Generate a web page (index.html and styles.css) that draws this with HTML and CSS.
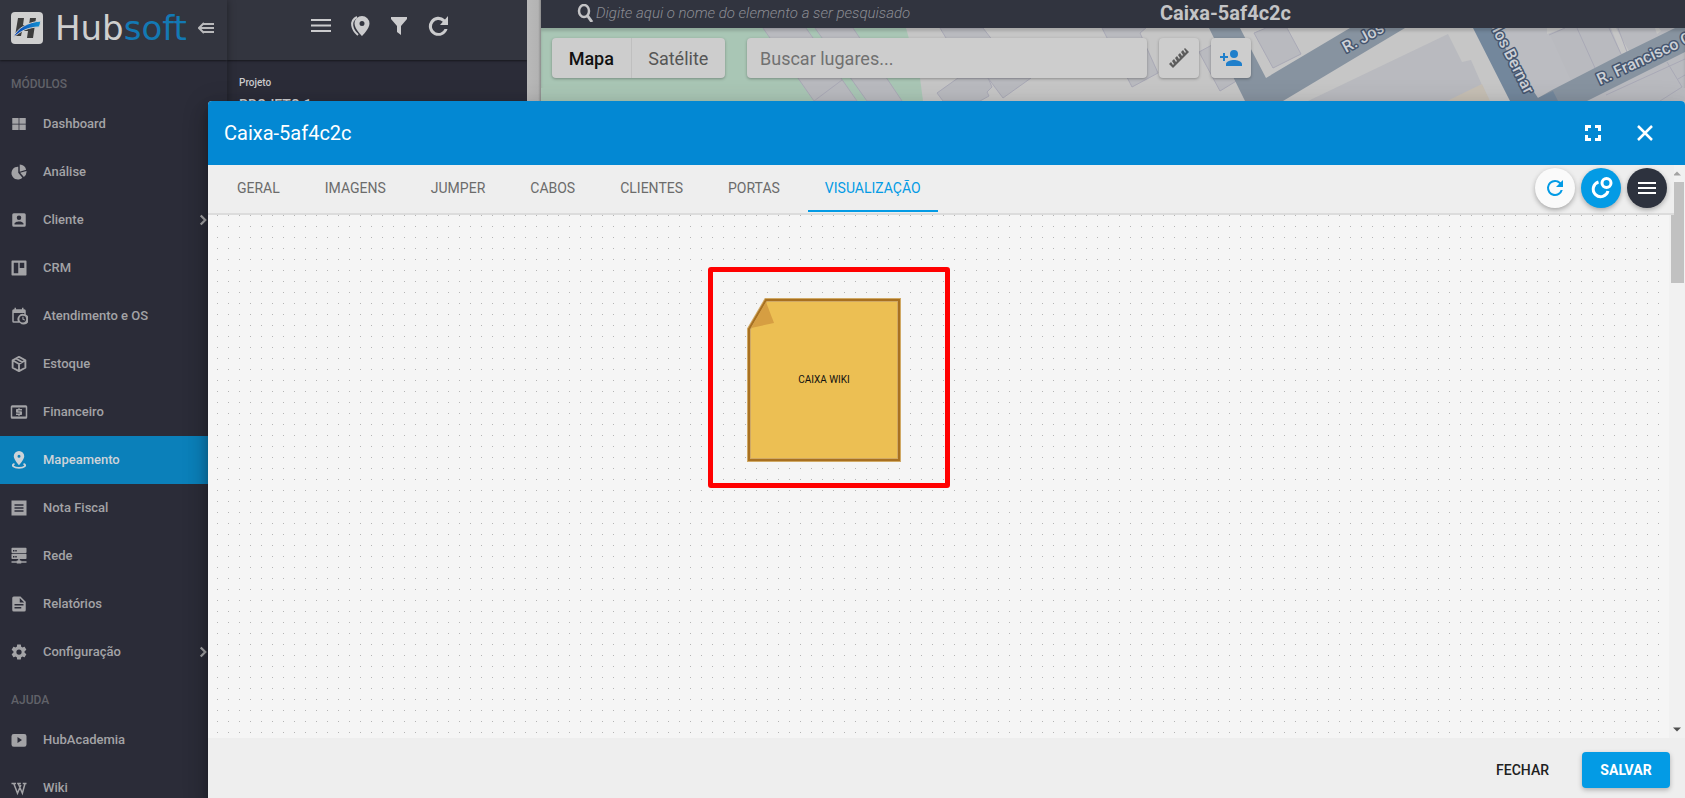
FILE: index.html
```html
<!DOCTYPE html>
<html lang="pt-BR">
<head>
<meta charset="utf-8">
<title>Hubsoft - Mapeamento</title>
<link rel="stylesheet" href="styles.css">
</head>
<body>
<div class="app">
  <aside class="sidebar">
    <header class="brand">
      <svg class="brand-mark" viewBox="0 0 32 32" aria-hidden="true">
        <defs><linearGradient id="swoosh"><stop offset="0" stop-color="#0a3fb5"/><stop offset="1" stop-color="#1292d0"/></linearGradient></defs>
        <rect width="32" height="32" rx="4" fill="#cfcfcf"/>
        <path d="M7 6h6l-1 7h6l1-7h6l-3 20h-6l1-7H11l-1 5H4z" fill="#3c3c3c"/>
        <path d="M2 26C6 16 17 10 30 9c-1 3-1 5-2 6C18 15 9 19 2 26z" fill="url(#swoosh)" stroke="#cfcfcf"/>
      </svg>
      <span class="brand-name">Hub<span class="brand-accent">soft</span></span>
      <button class="plain brand-toggle" aria-label="Recolher menu"><svg viewBox="0 0 16 12"><path d="M5 2h11M1 6h15M5 10h11M6 1L1 6l5 5" fill="none" stroke="currentColor" stroke-width="2"/></svg></button>
    </header>
    <nav class="menu">
      <h2 class="menu-title">MÓDULOS</h2>
      <a class="menu-item" href="#"><svg class="ico" viewBox="0 0 24 24"><path d="M3 4h8.500v7.500H3zM12.500 4H21v7.500h-8.500zM3 12.500h8.500V20H3zM12.500 12.500H21V20h-8.500z"/></svg>Dashboard</a>
      <a class="menu-item" href="#"><svg class="ico" viewBox="0 0 24 24"><path d="M11 5v8l5.500 6.500A8.500 8.500 0 1 1 11 5zM13 2a9 9 0 0 1 8.500 7L13 11.500zM13.500 13l8.500-2.500a9 9 0 0 1-3.500 8z"/></svg>Análise</a>
      <a class="menu-item" href="#"><svg class="ico" viewBox="0 0 24 24"><path d="M3 5v14a2 2 0 0 0 2 2h14a2 2 0 0 0 2-2V5a2 2 0 0 0-2-2H5a2 2 0 0 0-2 2zm12 4a3 3 0 1 1-6 0 3 3 0 0 1 6 0zm-9 8c0-2 4-3.100 6-3.100s6 1.100 6 3.100v1H6z"/></svg>Cliente<svg class="ico chevron" viewBox="0 0 24 24"><path d="M9 6l6 6-6 6" fill="none" stroke="currentColor" stroke-width="3"/></svg></a>
      <a class="menu-item" href="#"><svg class="ico" viewBox="0 0 24 24"><path fill-rule="evenodd" d="M3 2h18a1 1 0 0 1 1 1v18a1 1 0 0 1-1 1H3a1 1 0 0 1-1-1V3a1 1 0 0 1 1-1zm2 3v14h6V5zm8 0v7h6V5z"/></svg>CRM</a>
      <a class="menu-item" href="#"><svg class="ico" viewBox="0 0 24 24"><path fill-rule="evenodd" d="M6 1h2v2h8V1h2v2h1a2 2 0 0 1 2 2v5a7 7 0 1 1-8 11H5a2 2 0 0 1-2-2V5a2 2 0 0 1 2-2h1zM5 8v11h5.500A7 7 0 0 1 19 9.500V8zm12 3.500a4.500 4.500 0 1 0 0 9 4.500 4.500 0 0 0 0-9zM16.500 13v3.500l3 1.500.6-1-2.100-1.200V13z"/></svg>Atendimento e OS</a>
      <a class="menu-item" href="#"><svg class="ico" viewBox="0 0 24 24"><path d="M12 2.500l8.500 4.500v10L12 21.500 3.500 17V7zM3.500 7l8.500 5 8.500-5M12 12v9.500M8 4.700l8.500 5" fill="none" stroke="currentColor" stroke-width="2.500" stroke-linejoin="round"/></svg>Estoque</a>
      <a class="menu-item" href="#"><svg class="ico" viewBox="0 0 24 24"><path fill-rule="evenodd" d="M3 3h18a2 2 0 0 1 2 2v14a2 2 0 0 1-2 2H3a2 2 0 0 1-2-2V5a2 2 0 0 1 2-2zm0 3v12h18V6z"/><path d="M11 7h2v1h3v2h-5v1h4a1 1 0 0 1 1 1v3a1 1 0 0 1-1 1h-2v1h-2v-1H8v-2h5v-1H9a1 1 0 0 1-1-1V9a1 1 0 0 1 1-1h2z"/></svg>Financeiro</a>
      <a class="menu-item active" href="#" aria-current="page"><svg class="ico" viewBox="0 0 24 24"><path fill-rule="evenodd" d="M12 0a7 7 0 0 1 7 7c0 4.500-7 12-7 12S5 11.500 5 7a7 7 0 0 1 7-7zm0 5a2 2 0 1 0 0 4 2 2 0 0 0 0-4z"/><path d="M6 17c-5 2-1 5.500 6 5.500s11-3.500 6-5.500" fill="none" stroke="currentColor" stroke-width="2.500"/></svg>Mapeamento</a>
      <a class="menu-item" href="#"><svg class="ico" viewBox="0 0 24 24"><path fill-rule="evenodd" d="M2 2h20v20H2zm4 5v2h12V7zm0 4v2h12v-2zm0 4v2h12v-2z"/></svg>Nota Fiscal</a>
      <a class="menu-item" href="#"><svg class="ico" viewBox="0 0 24 24"><path fill-rule="evenodd" d="M3 1h18a1 1 0 0 1 1 1v5a1 1 0 0 1-1 1H3a1 1 0 0 1-1-1V2a1 1 0 0 1 1-1zm1 3v2h2V4zm3 0v2h2V4zM3 9h18a1 1 0 0 1 1 1v5a1 1 0 0 1-1 1h-8v2h2v1h7v2h-7v1H9v-1H2v-2h7v-1h2v-2H3a1 1 0 0 1-1-1v-5a1 1 0 0 1 1-1zm1 3v2h2v-2zm3 0v2h2v-2z"/></svg>Rede</a>
      <a class="menu-item" href="#"><svg class="ico" viewBox="0 0 24 24"><path fill-rule="evenodd" d="M5 2h9l7 7v11a2 2 0 0 1-2 2H5a2 2 0 0 1-2-2V4a2 2 0 0 1 2-2zm8 2v6h6zM6 12v2h12v-2zm0 4v2h9v-2z"/></svg>Relatórios</a>
      <a class="menu-item" href="#"><svg class="ico" viewBox="0 0 24 24"><path d="M12 15.500A3.500 3.500 0 1 1 12 8.500a3.500 3.500 0 0 1 0 7m7.430-2.530c.04-.32.070-.64.070-.97s-.03-.66-.07-1l2.110-1.630c.19-.15.240-.42.120-.64l-2-3.460c-.12-.22-.39-.31-.61-.22l-2.490 1c-.52-.39-1.060-.73-1.690-.98l-.37-2.650A.506.506 0 0 0 14 2h-4c-.25 0-.46.180-.5.420l-.37 2.650c-.63.250-1.170.590-1.690.98l-2.490-1c-.22-.09-.49 0-.61.220l-2 3.460c-.13.220-.07.490.12.640L4.570 11c-.04.340-.07.670-.07 1s.03.650.07.970l-2.110 1.660c-.19.150-.25.420-.12.640l2 3.460c.12.220.39.300.61.220l2.490-1.010c.52.400 1.060.74 1.690.99l.37 2.650c.04.240.25.420.5.420h4c.25 0 .46-.18.5-.42l.37-2.650c.63-.26 1.170-.59 1.690-.99l2.490 1.010c.22.080.49 0 .61-.22l2-3.460c.12-.22.070-.49-.12-.64z"/></svg>Configuração<svg class="ico chevron" viewBox="0 0 24 24"><path d="M9 6l6 6-6 6" fill="none" stroke="currentColor" stroke-width="3"/></svg></a>
      <h2 class="menu-title">AJUDA</h2>
      <a class="menu-item" href="#"><svg class="ico" viewBox="0 0 24 24"><path fill-rule="evenodd" d="M5 4h14a3 3 0 0 1 3 3v11a3 3 0 0 1-3 3H5a3 3 0 0 1-3-3V7a3 3 0 0 1 3-3zm5 4v8l6-4z"/></svg>HubAcademia</a>
      <a class="menu-item" href="#"><svg class="ico" viewBox="0 0 24 24"><path d="M2 6h6M9.500 6h5M17 6h5M5 6l5 13 4.500-11M11 6l5.500 13L20 6" fill="none" stroke="currentColor" stroke-width="2"/></svg>Wiki</a>
    </nav>
  </aside>

  <section class="project">
    <header class="project-bar">
      <button class="plain tool" aria-label="Menu"><svg viewBox="0 0 24 24"><path d="M2 5h20v2H2zm0 5.500h20v2H2zM2 16h20v2H2z"/></svg></button>
      <button class="plain tool" aria-label="Marcadores"><svg viewBox="0 0 24 24"><path fill-rule="evenodd" d="M14 2a7.500 7.500 0 0 1 7.500 7.500C21.500 15 14 22 14 22S6.500 15 6.500 9.500A7.500 7.500 0 0 1 14 2zm0 5a2.500 2.500 0 1 0 0 5 2.500 2.500 0 0 0 0-5z"/><path d="M9 3C1 7 4 16 10 21" fill="none" stroke="currentColor" stroke-width="2"/></svg></button>
      <button class="plain tool" aria-label="Filtro"><svg viewBox="0 0 24 24"><path d="M4 3h16v2l-6 7v9l-4-3v-6L4 5z"/></svg></button>
      <button class="plain tool" aria-label="Atualizar"><svg viewBox="0 0 24 24"><path d="M19 5.500a9.500 9.500 0 1 0 2.500 9.500h-3a6.500 6.500 0 1 1-1.700-7.300L14 11h8V2z"/></svg></button>
    </header>
    <div class="project-body">
      <div class="project-label">Projeto</div>
      <div class="project-name">PROJETO 1</div>
    </div>
  </section>

  <div class="gutter"></div>

  <main class="map-area">
    <header class="map-bar">
      <label class="element-search">
        <svg viewBox="0 0 18 18" aria-hidden="true"><ellipse cx="8" cy="7" rx="5" ry="6" fill="none" stroke="currentColor" stroke-width="2.500"/><path d="M11 11l5 7" stroke="currentColor" stroke-width="3"/></svg>
        <input type="text" aria-label="Pesquisar elemento" placeholder="Digite aqui o nome do elemento a ser pesquisado">
      </label>
      <h1 class="map-title">Caixa-5af4c2c</h1>
    </header>
    <div class="map">
      <svg class="map-drawing" viewBox="541 28 1144 770" preserveAspectRatio="xMinYMin slice" aria-hidden="true">
        <rect x="541" y="28" width="1144" height="770" fill="#c6c6c6"/>
        <path d="M541 28H906L920 78 923 101V798H541z" fill="#a9c6b5"/>
        <g fill="#b9babf" stroke="#a9a9b6">
          <path d="M763 28l51 73h43l-51-73zM815 28l52 73h35l-49-73zM814 101l28-21"/>
          <path d="M940 28l30 50 30-28-17-22zM937 93l21-15h30l4 9-5 5 2 4-9 5h-37zM988 78l15 20 28-20z"/>
          <path d="M1102 28l30 59 26-14-18-40 6-5zM1199 52l21 39 18-11-26-35zM1254 33l12-5h21l14 26-28 14z"/>
        </g>
        <path d="M1308 101l140-67 14 28 9-2 18 41z" fill="#b9babf"/>
        <path d="M1447 101l35-17 8 17z" fill="#c6bfb4"/>
        <path d="M1492 28h193v73H1558z" fill="#b9babf"/>
        <path d="M1492 28h55l25 55-36 17z" fill="#bbbcc1"/>
        <path d="M1547 34l18-6h-18zM1611 28l10 26 8-3-13-23zM1655 28l2 6 4-3-2-3z" fill="#c6c6c6"/>
        <path d="M1577 28l18 40M1609 28l12 26M1618 28l9 24M1549 35l16-7M1606 95l79-36M1667 62l15 25-22 14M1678 79l7-4" fill="none" stroke="#a9a9b6"/>
        <path d="M1209 28h31l26 50 84-50h55l-122 73h-38z" fill="#8793a0"/>
        <path d="M1538 98l14-8 70-36 53-26h10v24l-98 49h-47z" fill="#8793a0"/>
        <path d="M1473 28h19l46 70 15-7 5 10h-48z" fill="#73879c"/>
        <g class="street">
          <text transform="translate(1346 53) rotate(-29)">R. Jos</text>
          <text transform="translate(1600 85) rotate(-25)">R. Francisco G</text>
          <text transform="translate(1492 30) rotate(63)">los Bernar</text>
        </g>
      </svg>
      <div class="map-controls">
        <div class="map-type">
          <button class="map-type-on">Mapa</button><button>Satélite</button>
        </div>
        <input class="place-search" type="text" aria-label="Buscar lugares" placeholder="Buscar lugares...">
        <button class="map-button" aria-label="Régua"><svg viewBox="0 0 24 24"><path d="M2 18l2-2 2 3 1-1-2-3 2-2 2 3 1-1-2-3 2-2 2 3 1-1-2-3 2-2 2 3 1-1-2-3 2-2 2 3 1-1-2-3 1-1 4 4L6 22z"/></svg></button>
        <button class="map-button map-button-blue" aria-label="Adicionar cliente"><svg viewBox="0 0 24 24"><path d="M15 12a4 4 0 1 0 0-8 4 4 0 0 0 0 8zm-9-2V7H4v3H1v2h3v3h2v-3h3v-2zm9 4c-2.670 0-8 1.340-8 4v2h16v-2c0-2.660-5.330-4-8-4z"/></svg></button>
      </div>
    </div>
  </main>
</div>

<div class="dialog" role="dialog" aria-labelledby="dialog-title">
  <header class="dialog-head">
    <h2 id="dialog-title">Caixa-5af4c2c</h2>
    <button class="plain head-button" aria-label="Tela cheia"><svg viewBox="0 0 24 24"><path d="M4 4h6v3H7v3H4zM14 4h6v6h-3V7h-3zM4 14h3v3h3v3H4zM17 14h3v6h-6v-3h3z"/></svg></button>
    <button class="plain head-button" aria-label="Fechar janela"><svg viewBox="0 0 24 24"><path d="M5 5l14 14M19 5L5 19" stroke="currentColor" stroke-width="2.500"/></svg></button>
  </header>
  <div class="dialog-body">
    <div class="tab-bar">
      <div class="tabs" role="tablist">
        <button role="tab">GERAL</button>
        <button role="tab">IMAGENS</button>
        <button role="tab">JUMPER</button>
        <button role="tab">CABOS</button>
        <button role="tab">CLIENTES</button>
        <button role="tab">PORTAS</button>
        <button role="tab" class="tab-on" aria-selected="true">VISUALIZAÇÃO</button>
      </div>
      <div class="actions">
        <button class="round round-light" aria-label="Atualizar"><svg viewBox="0 0 24 24"><path d="M17.650 6.350A7.960 7.960 0 0 0 12 4a8 8 0 1 0 7.730 10h-2.080A6 6 0 1 1 12 6c1.660 0 3.140.69 4.220 1.780L13 11h7V4z"/></svg></button>
        <button class="round round-blue" aria-label="Conexões"><svg viewBox="0 0 24 24"><g fill="none" stroke="currentColor" stroke-width="3"><circle cx="17.500" cy="7" r="4.500"/><path d="M9.500 6a7.500 7.500 0 1 0 9.500 9"/></g></svg></button>
        <button class="round round-dark" aria-label="Menu"><svg viewBox="0 0 24 24"><path d="M3 6h18v2H3zm0 5h18v2H3zm0 5h18v2H3z"/></svg></button>
      </div>
    </div>
    <div class="canvas">
      <svg class="dots" aria-hidden="true">
        <defs><pattern id="dot-grid" width="11" height="11" patternUnits="userSpaceOnUse"><rect x="9" width="1" height="1" fill="#b4b4b4"/></pattern></defs>
        <rect width="100%" height="100%" fill="url(#dot-grid)"/>
      </svg>
      <div class="highlight"></div>
      <div class="note">
        <svg viewBox="0 0 154 164" aria-hidden="true">
          <path d="M19 2H152V162H2V31z" fill="#ecbf53" stroke="#d0a965" stroke-width="4"/>
          <path d="M19 2H152V162H2V31z" fill="none" stroke="#a87020" stroke-width="2"/>
          <path d="M19 4L27 25 4 30z" fill="#d69e42"/>
        </svg>
        <span>CAIXA WIKI</span>
      </div>
    </div>
    <div class="scrollbar" aria-hidden="true">
      <svg viewBox="0 0 16 16"><path d="M4 10l4-4 4 4z" fill="#a3a3a3"/></svg>
      <div class="thumb"></div>
      <svg viewBox="0 0 16 16"><path d="M4 6h8l-4 4z" fill="#505050"/></svg>
    </div>
  </div>
  <footer class="dialog-foot">
    <button class="flat">FECHAR</button>
    <button class="primary">SALVAR</button>
  </footer>
</div>
</body>
</html>
```
FILE: styles.css
```css
* { box-sizing: border-box; }
html, body { height: 100%; }
body {
  margin: 0;
  overflow: hidden;
  position: relative;
  font-family: Roboto, "Liberation Sans", sans-serif;
  background: #2b2c38;
}
h1, h2 { margin: 0; }
button, input { font: inherit; margin: 0; border: 0; padding: 0; }
button { cursor: pointer; }
svg { display: block; fill: currentColor; }
.plain { background: none; color: inherit; }

.app {
  display: grid;
  grid-template-columns: 227px 300px 14px 1fr;
  height: 100%;
}

/* Sidebar */
.sidebar {
  background: #2b2c38;
  color: #a3a3a6;
  overflow: hidden;
  z-index: 1;
  box-shadow: 0 0 8px rgba(0, 0, 0, .4);
}
.brand {
  display: flex;
  align-items: center;
  height: 60px;
  padding: 0 13px 4px 11px;
  background: #33353f;
  box-shadow: 0 1px 2px rgba(0, 0, 0, .5);
}
.brand-mark { width: 32px; height: 32px; margin-right: 12px; }
.brand-name {
  flex: 1;
  font: 34px/32px "DejaVu Sans", sans-serif;
  color: #cfcfcf;
}
.brand-accent { color: #1379b4; }
.brand-toggle { color: #b9b9bb; }
.brand-toggle svg { width: 16px; height: 12px; }
.menu-title {
  height: 40px;
  padding: 8px 11px 0;
  font-size: 12px;
  line-height: 32px;
  font-weight: 500;
  color: #616269;
}
.menu-item {
  display: flex;
  align-items: center;
  gap: 15px;
  height: 48px;
  padding: 0 15px 1px 10px;
  font-size: 13px;
  font-weight: 500;
  color: inherit;
  text-decoration: none;
}
.menu-item.active { background: #0b80ba; color: #cdd3d8; }
.ico { width: 18px; height: 18px; }
.chevron { margin-left: auto; }

/* Project panel */
.project-bar {
  display: flex;
  align-items: center;
  justify-content: center;
  gap: 15px;
  height: 60px;
  padding: 0 0 8px 5px;
  background: #33353f;
  color: #cbcbcd;
  box-shadow: 0 1px 2px rgba(0, 0, 0, .5);
}
.tool svg { width: 24px; height: 24px; }
.project-body { padding: 17px 12px; color: #cbcbcd; }
.project-label { font-size: 10px; line-height: 12px; font-weight: 500; }
.project-name { padding-top: 6px; font-size: 14px; line-height: 20px; font-weight: 500; }
.gutter { background: linear-gradient(90deg, #b9b9b9, #b3b3b3 80%, #8c8c8c); }

/* Map */
.map-area { display: flex; flex-direction: column; min-width: 0; }
.map-bar {
  display: flex;
  align-items: center;
  justify-content: space-between;
  height: 28px;
  padding: 0 394px 3px 35px;
  background: #31343f;
  color: #c4c4c6;
}
.element-search { display: flex; gap: 2px; align-items: center; flex: 1; }
.element-search svg { width: 18px; height: 18px; }
.element-search input {
  flex: 1;
  background: none;
  color: inherit;
  font-size: 15px;
  font-weight: 300;
  font-style: italic;
}
.element-search input::placeholder { color: #8b8c93; opacity: 1; }
.map-title { font-size: 20px; line-height: 24px; font-weight: 700; }
.map { flex: 1; position: relative; overflow: hidden; }
.map-drawing { position: absolute; inset: 0; width: 100%; height: 100%; }
.street {
  font-size: 16px;
  font-weight: 500;
  fill: #ccd0d6;
  stroke: #46566f;
  stroke-width: 3px;
  stroke-linejoin: round;
  paint-order: stroke;
}
.map-controls {
  position: relative;
  display: flex;
  gap: 12px;
  padding: 10px 11px;
  box-shadow: inset 0 3px 3px rgba(0, 0, 0, .15);
}
.map-type, .place-search, .map-button {
  height: 40px;
  background: #cdcdcd;
  border-radius: 4px;
  box-shadow: 0 1px 3px rgba(0, 0, 0, .3);
}
.map-type { display: flex; width: 173px; margin-right: 10px; overflow: hidden; font-size: 18px; }
.map-type button { flex: 1 1 auto; background: none; color: #555; }
.map-type .map-type-on { color: #111; font-weight: 500; border-right: 1px solid #bfbfbf; }
.place-search { width: 400px; padding: 0 13px; font-size: 18px; }
.place-search::placeholder { color: #717171; opacity: 1; }
.map-button { display: grid; place-items: center; width: 40px; color: #5c5c5c; }
.map-button svg { width: 24px; height: 24px; }
.map-button-blue { color: #1f7fcb; }

/* Dialog */
.dialog {
  position: absolute;
  inset: 101px 0 0 208px;
  z-index: 2;
  display: flex;
  flex-direction: column;
  border-radius: 4px 4px 0 0;
  background: #eee;
  box-shadow: 0 7px 8px rgba(0, 0, 0, .2), 0 13px 19px 2px rgba(0, 0, 0, .14), 0 5px 24px 4px rgba(0, 0, 0, .12);
}
.dialog-head {
  display: flex;
  align-items: center;
  gap: 28px;
  height: 64px;
  padding: 0 28px 0 16px;
  border-radius: 4px 4px 0 0;
  background: #0388d3;
  color: #fff;
}
.dialog-head h2 { flex: 1; font-size: 20px; font-weight: 400; }
.head-button svg { width: 24px; height: 24px; }
.dialog-body {
  flex: 1;
  min-height: 0;
  display: grid;
  grid-template: 50px 1fr / 1fr 16px;
}
.tab-bar {
  z-index: 1;
  display: flex;
  justify-content: space-between;
  margin-right: -5px;
  padding: 0 7px 0 12px;
  background: #eee;
  border-bottom: 2px solid #dcdcdc;
}
.tabs { display: flex; gap: 11px; }
.tabs button {
  padding: 0 17px;
  background: none;
  color: #6b6b6b;
  font-size: 14px;
  border-bottom: 2px solid transparent;
  margin-bottom: 1px;
}
.tabs .tab-on { color: #039be5; border-color: #039be5; }
.actions { display: flex; gap: 6px; padding-top: 3px; }
.round {
  display: grid;
  place-items: center;
  width: 40px;
  height: 40px;
  border-radius: 50%;
  box-shadow: 0 2px 5px rgba(0, 0, 0, .3);
}
.round svg { width: 24px; height: 24px; }
.round-light { background: #fafafa; color: #039be5; }
.round-blue { background: #039be5; color: #fff; }
.round-dark { background: #2d323e; color: #fff; }
.canvas { position: relative; overflow: hidden; background: #f5f5f5; }
.dots { width: 100%; height: 100%; }
.highlight {
  position: absolute;
  left: 500px;
  top: 52px;
  width: 242px;
  height: 221px;
  border: 5px solid #f00;
  border-radius: 3px;
}
.note {
  position: absolute;
  left: 539px;
  top: 83px;
  width: 154px;
  height: 164px;
  display: grid;
  place-items: center;
  font-size: 10px;
  color: #111;
}
.note > * { grid-area: 1 / 1; }
.note svg { width: 100%; height: 100%; }
.note span { position: relative; padding-bottom: 2px; }
.scrollbar {
  grid-area: 1 / 2 / 3 / 3;
  display: flex;
  flex-direction: column;
  background: #f1f1f1;
}
.thumb { height: 101px; margin: 0 1px 0 2px; background: #c1c1c1; }
.scrollbar svg { width: 16px; height: 17px; }
.scrollbar svg:last-child { margin-top: auto; }
.dialog-foot {
  display: flex;
  justify-content: flex-end;
  align-items: center;
  gap: 17px;
  height: 60px;
  padding: 4px 15px 0 16px;
  font-size: 14px;
}
.flat { height: 36px; padding: 0 16px; background: none; color: #212121; font-weight: 500; }
.primary {
  min-width: 88px;
  height: 36px;
  padding: 0 16px;
  border-radius: 4px;
  background: #039be5;
  color: #fff;
  font-weight: 700;
  box-shadow: 0 2px 5px rgba(0, 0, 0, .26);
}
```
